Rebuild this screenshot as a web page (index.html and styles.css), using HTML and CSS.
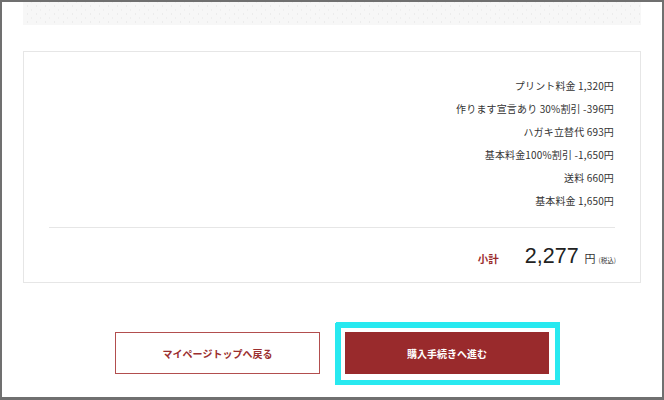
FILE: index.html
```html
<!DOCTYPE html>
<html lang="ja">
<head>
<meta charset="utf-8">
<link rel="stylesheet" href="styles.css">
</head>
<body>
<div class="frame">
  <div class="pattern"></div>
  <section class="card">
    <ul class="items">
      <li>プリント料金 1,320円</li>
      <li>作ります宣言あり 30%割引 -396円</li>
      <li>ハガキ立替代 693円</li>
      <li>基本料金100%割引 -1,650円</li>
      <li>送料 660円</li>
      <li>基本料金 1,650円</li>
    </ul>
    <div class="sep"></div>
    <div class="subtotal">
      <span class="sub-label">小計</span>
      <span class="sub-amount">2,277</span>
      <span class="sub-yen">円</span>
      <span class="sub-tax">(税込)</span>
    </div>
  </section>
  <div class="actions">
    <a class="btn btn-outline">マイページトップへ戻る</a>
    <a class="btn btn-primary">購入手続きへ進む</a>
  </div>
</div>
</body>
</html>
```

FILE: styles.css
```css
* { box-sizing: border-box; }
html, body { margin: 0; padding: 0; background: #fff; }
body {
  font-family: "Noto Sans CJK JP", "Noto Sans", sans-serif;
  color: #333;
}
.frame {
  width: 664px;
  height: 400px;
  border: 2px solid #707070;
  border-bottom-width: 3px;
  padding: 0 21px;
  overflow: hidden;
}
.pattern {
  height: 23px;
  background-color: #f7f7f7;
  background-image:
    radial-gradient(circle, #ececec 0.6px, transparent 1px),
    radial-gradient(circle, #efefef 0.5px, transparent 1px);
  background-size: 9px 8px, 9px 8px;
  background-position: 0 0, 4px 4px;
}
.card {
  margin-top: 26px;
  height: 232px;
  border: 1px solid #e6e6e6;
  padding: 22px 25px 0 25px;
}
.items {
  list-style: none;
  margin: 0;
  padding: 0 1px 0 0;
  text-align: right;
  font-size: 10px;
  line-height: 23px;
  letter-spacing: 0.15px;
  color: #333;
}
.sep {
  margin-top: 15px;
  height: 1px;
  background: #e6e6e6;
}
.subtotal {
  display: flex;
  justify-content: flex-end;
  align-items: baseline;
  padding-top: 16px;
  height: 42px;
}
.sub-label {
  color: #9a2a2a;
  font-size: 10.5px;
  font-weight: 700;
  margin-right: 26px;
}
.sub-amount {
  font-family: "Liberation Sans", Arial, sans-serif;
  font-size: 21.5px;
  color: #222;
  margin-right: 6px;
}
.sub-yen {
  font-size: 11px;
  color: #333;
  margin-right: 3px;
}
.sub-tax {
  font-size: 6.5px;
  color: #333;
  margin-right: -1px;
}
.actions {
  display: flex;
  justify-content: center;
  gap: 25px;
  margin-top: 49px;
}
.btn {
  display: flex;
  align-items: center;
  justify-content: center;
  height: 42px;
  font-size: 10px;
  font-weight: 700;
  text-decoration: none;
}
.btn-outline {
  width: 205px;
  border: 1px solid #b24e4e;
  color: #9b2f2f;
  background: #fff;
}
.btn-primary {
  width: 204px;
  background: #992a2c;
  color: #fff;
  box-shadow: 0 0 0 4px #fff, 1px 1px 0 5px #fff, 1px 0 0 10px #28e9f0, 0 1px 0 10px #28e9f0, 1px 1px 0 10px #28e9f0;
}
```
